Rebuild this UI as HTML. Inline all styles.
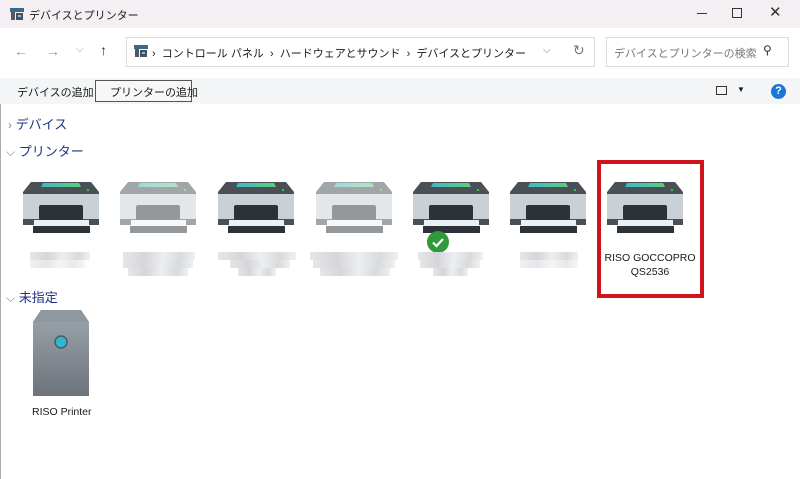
<!DOCTYPE html>
<html><head><meta charset="utf-8"><style>
*{margin:0;padding:0;box-sizing:border-box}
body{width:800px;height:479px;overflow:hidden;background:#fff;font-family:"Liberation Sans","Noto Sans CJK JP",sans-serif;position:relative;font-size:12px;color:#1a1a1a}
.abs{position:absolute}
.title{left:0;top:0;width:800px;height:28px;background:#f4eff3}
.nav{left:0;top:28px;width:800px;height:50px;background:#fff}
.tool{left:0;top:78px;width:800px;height:26px;background:#f3f5f7}
.addr{left:126px;top:37px;width:469px;height:30px;border:1px solid #dcdcdc;background:#fff}
.search{left:606px;top:37px;width:183px;height:30px;border:1px solid #dcdcdc}
.p{position:absolute;width:76px;height:52px}
.lbl{position:absolute;height:8px;background:linear-gradient(90deg,#e6e6e8,#d6d6da 30%,#eceef0 55%,#d8dadc 80%,#eef0f2)}
.cat{position:absolute;color:#1e3287;font-size:13px}
.chev{color:#888;font-size:12px}
</style></head><body>
<div class="abs" style="left:0;top:0;width:1px;height:479px;background:#aaa"></div>
<div class="abs title"></div>
<svg class="abs" style="left:10px;top:8px" width="14" height="13"><rect x="0" y="0" width="14" height="4" fill="#3a6a8a"/><rect x="1" y="4" width="4" height="8" fill="#556"/><rect x="6" y="5" width="7" height="7" fill="#4a5058"/><rect x="8" y="7" width="3" height="2" fill="#6cf"/></svg>
<div class="abs" style="left:29px;top:7px;font-size:11px">デバイスとプリンター</div>
<div class="abs" style="left:697px;top:13px;width:10px;height:1px;background:#333"></div>
<div class="abs" style="left:732px;top:8px;width:10px;height:10px;border:1px solid #333"></div>
<div class="abs" style="left:769px;top:3px;font-size:15px;color:#333">✕</div>
<div class="abs nav"></div>
<div class="abs" style="left:14px;top:43px;color:#999;font-size:14px">←</div>
<div class="abs" style="left:46px;top:43px;color:#999;font-size:14px">→</div>
<div class="abs" style="left:76px;top:44px;color:#999;font-size:10px">⌵</div>
<div class="abs" style="left:100px;top:42px;color:#333;font-size:14px">↑</div>
<div class="abs addr"></div>
<svg class="abs" style="left:134px;top:45px" width="14" height="13"><rect x="0" y="0" width="14" height="4" fill="#3a6a8a"/><rect x="1" y="4" width="4" height="8" fill="#556"/><rect x="6" y="5" width="7" height="7" fill="#4a5058"/><rect x="8" y="7" width="3" height="2" fill="#6cf"/></svg>
<div class="abs" style="left:152px;top:45px;font-size:11px">›&nbsp; コントロール パネル &nbsp;›&nbsp; ハードウェアとサウンド &nbsp;›&nbsp; デバイスとプリンター</div>
<div class="abs" style="left:543px;top:45px;color:#777;font-size:10px">⌵</div>
<div class="abs" style="left:573px;top:42px;color:#777;font-size:14px">↻</div>
<div class="abs search"></div>
<div class="abs" style="left:614px;top:45px;font-size:11px;color:#777">デバイスとプリンターの検索</div>
<div class="abs" style="left:763px;top:43px;font-size:12px;color:#333">⚲</div>
<div class="abs tool"></div>
<div class="abs" style="left:17px;top:84px;font-size:11px">デバイスの追加</div>
<div class="abs" style="left:95px;top:80px;width:97px;height:22px;border:1px solid #555;background:#f5f7f9"></div>
<div class="abs" style="left:110px;top:84px;font-size:11px">プリンターの追加</div>
<div class="abs" style="left:716px;top:86px;width:11px;height:9px;border:1px solid #333"></div>
<div class="abs" style="left:737px;top:85px;font-size:8px">▼</div>
<div class="abs" style="left:771px;top:84px;width:15px;height:15px;border-radius:50%;background:#1a78d4;color:#fff;font-size:11px;font-weight:bold;text-align:center;line-height:15px">?</div>
<div class="cat" style="left:8px;top:114px"><span class="chev">›</span> デバイス</div>
<div class="cat" style="left:6px;top:141px"><span class="chev">⌵</span> プリンター</div>
<div class="cat" style="left:6px;top:287px"><span class="chev">⌵</span> 未指定</div>

<svg width="0" height="0" style="position:absolute"><defs>
<linearGradient id="gl" x1="0" x2="1"><stop offset="0" stop-color="#3fb8c8"/><stop offset="1" stop-color="#5ccf7a"/></linearGradient>
<g id="pr"><path d="M8 0H68L76 10V12H0V10Z" fill="#4a5056"/><path d="M20 1H56L58 5H18Z" fill="url(#gl)"/><rect x="64" y="7" width="2" height="2" fill="#3c3"/><rect x="0" y="12" width="76" height="25" fill="#c9d1d7"/><rect x="0" y="37" width="76" height="6" fill="#4a5056"/><rect x="16" y="23" width="44" height="15" rx="2" fill="#2b3338"/><rect x="11" y="38" width="55" height="6" fill="#eef0f1"/><rect x="10" y="44" width="57" height="7" fill="#2b3338"/></g>
</defs></svg>
<svg class="p" style="left:23px;top:182px"><use href="#pr"/></svg>
<svg class="p" style="left:120px;top:182px;opacity:.5"><use href="#pr"/></svg>
<svg class="p" style="left:218px;top:182px"><use href="#pr"/></svg>
<svg class="p" style="left:316px;top:182px;opacity:.5"><use href="#pr"/></svg>
<svg class="p" style="left:413px;top:182px"><use href="#pr"/></svg>
<svg class="p" style="left:510px;top:182px"><use href="#pr"/></svg>
<svg class="p" style="left:607px;top:182px"><use href="#pr"/></svg>
<svg class="abs" style="left:427px;top:231px" width="22" height="22"><circle cx="11" cy="11" r="11" fill="#2e9a3a"/><path d="M6 11.5L9.5 15L16 8" stroke="#fff" stroke-width="2.2" fill="none"/></svg>

<div class="lbl" style="left:30px;top:252px;width:60px"></div><div class="lbl" style="left:30px;top:260px;width:55px;opacity:.6"></div>
<div class="lbl" style="left:123px;top:252px;width:72px"></div><div class="lbl" style="left:123px;top:260px;width:70px"></div><div class="lbl" style="left:128px;top:268px;width:60px"></div>
<div class="lbl" style="left:218px;top:252px;width:78px"></div><div class="lbl" style="left:230px;top:260px;width:60px"></div><div class="lbl" style="left:238px;top:268px;width:38px"></div>
<div class="lbl" style="left:310px;top:252px;width:88px"></div><div class="lbl" style="left:313px;top:260px;width:82px"></div><div class="lbl" style="left:320px;top:268px;width:70px"></div>
<div class="lbl" style="left:418px;top:252px;width:65px"></div><div class="lbl" style="left:420px;top:260px;width:60px"></div><div class="lbl" style="left:433px;top:268px;width:35px"></div>
<div class="lbl" style="left:520px;top:252px;width:58px"></div><div class="lbl" style="left:520px;top:260px;width:58px;opacity:.6"></div>
<div class="abs" style="left:600px;top:251px;width:100px;text-align:center;font-size:10.5px;line-height:14px">RISO GOCCOPRO<br>QS2536</div>
<div class="abs" style="left:597px;top:160px;width:107px;height:138px;border:4px solid #d0141c"></div>

<svg class="abs" style="left:33px;top:310px" width="56" height="88"><defs><linearGradient id="g" x1="0" y1="0" x2="0" y2="1"><stop offset="0" stop-color="#9ea6ae"/><stop offset="1" stop-color="#6c737b"/></linearGradient></defs><path d="M8 0H48L56 12V86H0V12Z" fill="url(#g)"/><path d="M8 0H48L56 12H0Z" fill="#8f979f"/><circle cx="28" cy="32" r="6" fill="#2fb8d0" stroke="#4a5a66" stroke-width="1.5"/></svg>
<div class="abs" style="left:32px;top:406px;font-size:10.5px">RISO Printer</div>
</body></html>
